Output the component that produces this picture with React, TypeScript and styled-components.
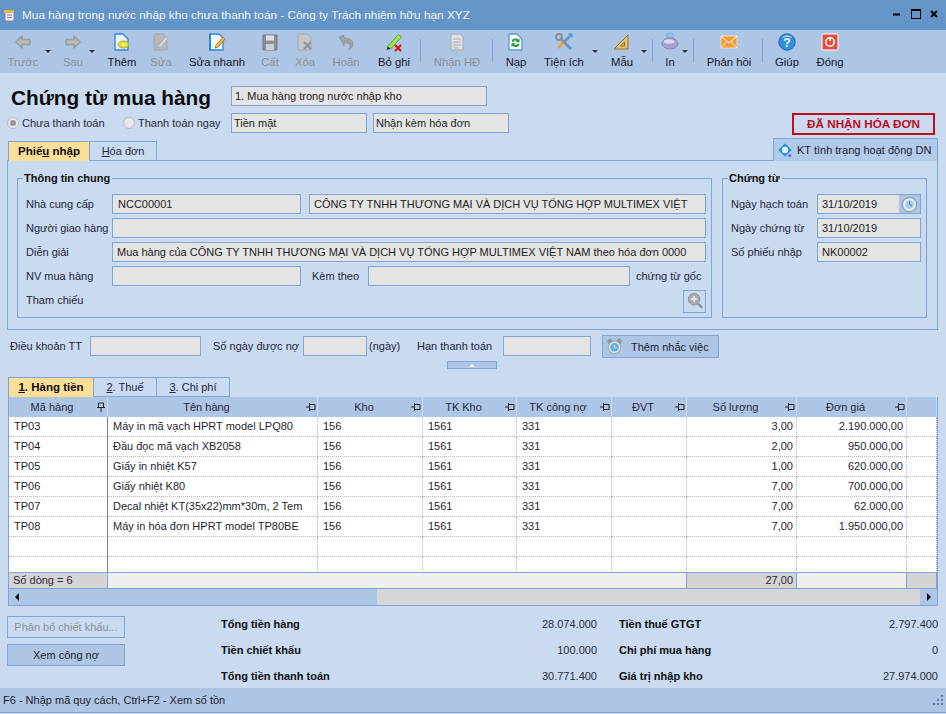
import React from "react";
import styled, { createGlobalStyle } from "styled-components";

const Global = createGlobalStyle`
  html, body { margin: 0; padding: 0; background: #c9daf1; }
  * { box-sizing: border-box; }
  body { font-family: "Liberation Sans", Arial, sans-serif; font-size: 11px; color: #1b1b2b; }
`;

const Page = styled.div`
  width: 946px; height: 714px; display: flex; flex-direction: column; overflow: hidden; background: #c9daf1;
`;
const TitleBar = styled.header`
  height: 30px; flex: none; background: #6495c8; display: flex; align-items: center; padding: 0 5px 0 3px; color: #f2f6fb; font-size: 11.8px;
`;
const TitleText = styled.span` margin-left: 6px; flex: 1; `;
const WinButtons = styled.div` display: flex; align-items: center; gap: 7px; margin-top: -2px; `;

const Toolbar = styled.nav` height: 43px; flex: none; background: #aec6e6; display: flex; align-items: flex-start; padding-left: 4px; `;
const ToolItem = styled.div<{ $w: number; $ml: number; $off?: boolean }>`
  position: relative; flex: none; width: ${p => p.$w}px; margin-left: ${p => p.$ml}px; height: 43px;
  display: flex; flex-direction: column; align-items: center; white-space: nowrap; padding-top: 2px;
  color: ${p => (p.$off ? "#8b9096" : "#15152a")}; font-size: 11.3px;
  span { margin-top: 3px; line-height: 14px; }
`;
const ToolCaret = styled.i<{ $x: number }>`
  position: absolute; top: 20px; left: ${p => p.$x}px; width: 0; height: 0;
  border-left: 3px solid transparent; border-right: 3px solid transparent; border-top: 3px solid #333;
`;
const ToolSep = styled.div<{ $ml: number }>` flex: none; width: 1px; height: 23px; margin: 9px 0 0 ${p => p.$ml}px; background: #7fa5d7; `;

const Body = styled.main` flex: 1; min-height: 0; padding: 0 8px 0 7px; display: flex; flex-direction: column; > * { flex: none; } `;
const HeadGrid = styled.section`
  margin-top: 13px; display: grid; grid-template-columns: 224px 1fr; grid-template-rows: 20px 20px; row-gap: 7px;
`;
const DocTitle = styled.h1` margin: 0 0 0 4px; font-size: 20.8px; line-height: 24px; font-weight: 700; color: #0c0c0c; white-space: nowrap; `;
const Field = styled.div<{ $w?: number; $pad?: number }>`
  height: 20px; line-height: 18px; padding: 0 ${p => p.$pad ?? 4}px; background: #e4e4e4; border: 1px solid #7fa5d7; color: #222; white-space: nowrap; overflow: hidden;
  flex: none; ${p => (p.$w ? `width: ${p.$w}px;` : "")}
`;
const RadioRow = styled.div` display: flex; align-items: center; color: #2a2a3a; `;
const Radio = styled.i<{ $on?: boolean }>`
  width: 12px; height: 12px; border-radius: 50%; margin-right: 3px; background: #e8e8e8; border: 1px solid #b5bcc6; flex: none;
  display: flex; align-items: center; justify-content: center;
  ${p => (p.$on ? `&::after { content: ""; width: 6px; height: 6px; border-radius: 50%; background: #9a9a9a; }` : "")}
`;
const RadioLabel = styled.label<{ $w: number }>` display: flex; align-items: center; width: ${p => p.$w}px; flex: none; white-space: nowrap; `;
const HeadFields = styled.div` display: flex; gap: 6px; align-items: flex-start; `;
const RedBox = styled.div`
  margin-left: auto; margin-right: 3px; width: 143px; height: 22px; border: 2px solid #c00d1e; color: #c00d1e; font-weight: 700; text-align: center; line-height: 18px; font-size: 11.7px;
`;

const TabRow = styled.div` margin-top: 5px; height: 23px; display: flex; align-items: flex-end; padding-left: 1px; position: relative; z-index: 1; `;
const Tab = styled.div<{ $w: number; $on?: boolean }>`
  width: ${p => p.$w}px; height: 20px; flex: none; text-align: center; line-height: 18px; border: 1px solid #7fa5d7; border-left-width: 0;
  border-bottom: ${p => (p.$on ? "0" : "1px solid #7fa5d7")};
  background: ${p => (p.$on ? "#fbdf99" : "#c9daf1")}; font-weight: ${p => (p.$on ? 700 : 400)}; color: ${p => (p.$on ? "#0c0c0c" : "#26263a")};
  font-size: ${p => (p.$on ? "11.5px" : "11px")};
  &:first-child { border-left: 1px solid #7fa5d7; }
  u { text-underline-offset: 1px; }
`;
const KtButton = styled.div`
  margin-left: auto; width: 165px; height: 23px; display: flex; align-items: center; gap: 4px; padding-left: 3px; background: #b3cbea; border: 1px solid #7fa5d7; border-bottom: 0; color: #1b1b2b; white-space: nowrap;
`;
const TabPanel = styled.section`
  height: 170px; margin-top: -1px; border: 1px solid #7fa5d7; padding: 10px 10px 10px 9px; display: grid; grid-template-columns: 695px 205px; column-gap: 10px;
`;
const Group = styled.fieldset`
  margin: 0; min-width: 0; border: 1px solid #7fa5d7; padding: 9px 5px 0 8px; height: 147px;
`;
const Legend = styled.legend` font-weight: 700; color: #0e0e0e; padding: 0 2px 0 1px; margin-left: -3px; line-height: 14px; `;
const FormRow = styled.div` display: flex; align-items: center; height: 20px; margin-bottom: 4px; white-space: nowrap; `;
const FormLabel = styled.label<{ $w: number }>` flex: none; width: ${p => p.$w}px; color: #26263a; `;
const Spacer = styled.div<{ $w: number }>` flex: none; width: ${p => p.$w}px; `;
const LookupButton = styled.div`
  margin-left: auto; width: 23px; height: 23px; margin-top: 2px; border: 1px solid #7fa5d7; display: flex; align-items: center; justify-content: center;
`;
const DateField = styled(Field)` padding-right: 0; display: flex; justify-content: space-between; `;
const DateButton = styled.div` width: 21px; height: 18px; background: #aec6e6; display: flex; align-items: center; justify-content: center; `;

const TermsRow = styled.section` margin-top: 6px; height: 23px; display: flex; align-items: flex-start; white-space: nowrap; color: #26263a; `;
const TermLabel = styled.label<{ $w: number; $ml?: number }>` flex: none; width: ${p => p.$w}px; margin-left: ${p => p.$ml ?? 0}px; line-height: 20px; `;
const RemindButton = styled.div`
  flex: none; margin: -1px 0 0 11px; width: 117px; height: 23px; background: #aec6e6; border: 1px solid #7fa5d7; display: flex; align-items: center; gap: 8px; padding-left: 3px; color: #1b1b2b;
`;
const CollapseBar = styled.div`
  margin: 2px 0 0 440px; width: 50px; height: 8px; background: #aec6e6; border: 1px solid #7fa5d7; display: flex; justify-content: center; align-items: center;
  &::after { content: ""; border-left: 3px solid transparent; border-right: 3px solid transparent; border-bottom: 3px solid #fff; }
`;
const GridTabs = styled.div` margin-top: 8px; height: 20px; display: flex; padding-left: 1px; `;

const GridBox = styled.section` margin-left: 1px; width: 930px; border: 1px solid #7fa5d7; border-top: 0; background: #fff; `;
const COLS = "99px 210px 105px 94px 95px 75px 110px 110px 30px";
const HeadRow = styled.div` display: grid; grid-template-columns: ${COLS}; height: 20px; background: #aec6e6; `;
const HeadCell = styled.div`
  position: relative; text-align: center; line-height: 20px; padding-right: 12px; color: #26263a; border-right: 1px solid #c9daf1; white-space: nowrap; overflow: hidden;
  svg { position: absolute; right: 1px; top: 5px; }
`;
const RowsArea = styled.div` height: 155px; overflow: hidden; `;
const DataRow = styled.div` display: grid; grid-template-columns: ${COLS}; height: 20px; `;
const Cell = styled.div<{ $right?: boolean; $first?: boolean }>`
  padding: 0 3px 0 5px; line-height: 19px; text-align: ${p => (p.$right ? "right" : "left")}; color: #1e1e2e; white-space: nowrap; overflow: hidden;
  border-bottom: 1px dotted #b8b8b8; border-right: ${p => (p.$first ? "1px solid #808080" : "1px dotted #b8b8b8")};
`;
const FootRow = styled.div` display: grid; grid-template-columns: 99px 579px 110px 110px 30px; height: 16px; border-top: 1px solid #7fa5d7; `;
const FootCell = styled.div<{ $dark?: boolean; $right?: boolean }>`
  background: ${p => (p.$dark ? "#d4d4d4" : "#efefef")}; border-right: 1px solid #7fa5d7; padding: 0 3px 0 4px; line-height: 15px; text-align: ${p => (p.$right ? "right" : "left")}; color: #2a2a3a;
`;
const ScrollBar = styled.div` height: 17px; border-top: 1px solid #7fa5d7; display: flex; background: #d6d6d6; `;
const ScrollThumb = styled.div` width: 368px; background: #aec6e6; display: flex; align-items: center; padding-left: 6px; `;
const ScrollEnd = styled.div` margin-left: auto; width: 17px; background: #aec6e6; display: flex; align-items: center; justify-content: center; `;
const Arrow = styled.i<{ $dir: "l" | "r" }>`
  width: 0; height: 0; border-top: 4px solid transparent; border-bottom: 4px solid transparent;
  ${p => (p.$dir === "l" ? "border-right: 4px solid #111;" : "border-left: 4px solid #111;")}
`;

const Bottom = styled.section` margin-top: 5px; height: 77px; display: flex; `;
const BottomButtons = styled.div` flex: none; width: 118px; margin-right: 96px; padding-top: 5px; display: flex; flex-direction: column; gap: 6px; `;
const PlainButton = styled.div<{ $off?: boolean }>`
  height: 22px; line-height: 20px; text-align: center; border: 1px solid #7fa5d7; background: ${p => (p.$off ? "#c9daf1" : "#aec6e6")}; color: ${p => (p.$off ? "#8b9096" : "#1b1b2b")};
`;
const Summary = styled.div` display: grid; grid-template-columns: 376px 319px; column-gap: 22px; grid-auto-rows: 26px; `;
const SumCell = styled.div` display: flex; justify-content: space-between; align-items: center; strong { color: #0e0e0e; } span { color: #2a2a3a; } `;

const StatusBar = styled.footer`
  height: 25px; flex: none; margin-bottom: 1px; background: #aec6e6; border-bottom: 1px solid #7fa5d7; display: flex; align-items: center; justify-content: space-between; padding: 0 2px 0 3px; color: #1b1b2b;
`;

const Svg: React.FC<{ s?: number; children: React.ReactNode }> = ({ s = 20, children }) => (
  <svg width={s} height={s} viewBox="0 0 20 20" fill="none">{children}</svg>
);

const Doc = ({ c, f }: { c: string; f: string }) => (
  <path d="M3 2h8l5 5v11H3z" fill={f} stroke={c} strokeWidth="1.3" strokeLinejoin="round" />
);

const icons: Record<string, React.ReactNode> = {
  back: <Svg><path d="M9 4L3 10l6 6v-3.5h8v-5H9z" fill="#b9babb" stroke="#9a9c9e" strokeWidth="1.6" strokeLinejoin="round" /></Svg>,
  next: <Svg><path d="M11 4l6 6-6 6v-3.5H3v-5h8z" fill="#b9babb" stroke="#9a9c9e" strokeWidth="1.6" strokeLinejoin="round" /></Svg>,
  add: <Svg><Doc c="#2a86d8" f="#eef6fd" /><ellipse cx="11.5" cy="12.5" rx="5.5" ry="3.6" fill="#e9d63a" stroke="#a5981c" strokeWidth=".8" /><ellipse cx="11.5" cy="12.5" rx="2" ry="1.2" fill="#fff8b8" /></Svg>,
  edit: <Svg><path d="M3 2h9l4 4v12H3z" fill="#b6b8ba" stroke="#a0a2a4" /><path d="M8 13l7-8 2 1.5-7 8-3 1z" fill="#d9dbdc" stroke="#a0a2a4" strokeWidth=".6" /></Svg>,
  quick: <Svg><path d="M3 2h9l4 4v12H3z" fill="#eef6fd" stroke="#2a86d8" strokeWidth="1.3" /><path d="M3 2v16" stroke="#2a86d8" strokeWidth="2" /><path d="M9 13l7-8 2.2 2-7 8-3.2 1z" fill="#f0b93c" stroke="#8a6a20" strokeWidth=".7" /></Svg>,
  save: <Svg><path d="M3 3h14v15H3z" fill="#8c9094" stroke="#75797d" /><path d="M6 3.5h8v5H6z" fill="#e2e3e4" /><path d="M6 12h8v6H6z" fill="#cfd1d3" /></Svg>,
  del: <Svg><path d="M3 2h9l4 4v12H3z" fill="#c6c8ca" stroke="#a4a8ac" /><path d="M9 10l7 7m0-7l-7 7" stroke="#8f9397" strokeWidth="2.2" /></Svg>,
  undo: <Svg><path d="M3 5l5-2v3c5 0 9 2 9 6 0 3-2 5-5 6 2-2 3-4 1-6-1-1-3-1-5-1v3z" fill="#9ea2a7" stroke="#888c91" strokeWidth=".6" /></Svg>,
  skip: <Svg><path d="M3.5 14.5L14.5 2.5l3 2.5-11 12z" fill="#a9e05a" stroke="#5a9a2a" strokeWidth=".9" /><path d="M3.5 14.5l-1 3.5 4-1z" fill="#333" /><path d="M11 13l6 6m0-6l-6 6" stroke="#e01010" strokeWidth="2" /></Svg>,
  recv: <Svg><path d="M4 2h9l3 3v13H4z" fill="#dfe0e1" stroke="#a4a8ac" /><path d="M6.5 7h7M6.5 10h7M6.5 13h7M6.5 16h5" stroke="#a4a8ac" /></Svg>,
  load: <Svg><Doc c="#5f9ad2" f="#f2f7fc" /><path d="M5.5 9.5a4 4 0 016.8-1.8l1.2-1.2v3.8H9.7l1.2-1.2a2.2 2.2 0 00-3.6.9zM13.5 12a4 4 0 01-6.8 1.8l-1.2 1.2v-3.8h3.8l-1.2 1.2a2.2 2.2 0 003.6-.9z" fill="#1f9a35" /></Svg>,
  tools: <Svg><path d="M4 16L15 5" stroke="#e8a33c" strokeWidth="2.5" /><path d="M10 10l6-6" stroke="#4f9cd8" strokeWidth="2.5" /><path d="M14 2l4 4 1-3-2-2z" fill="#4f9cd8" /><path d="M14 14L6 6" stroke="#8a8f96" strokeWidth="2.5" /><circle cx="5" cy="5" r="3" fill="none" stroke="#8a8f96" strokeWidth="2" /><path d="M13 13l4 4" stroke="#4f9cd8" strokeWidth="3" /></Svg>,
  form: <Svg><path d="M16 3v14H2z" fill="#e6c46c" stroke="#94702a" /><path d="M12.5 10v4H8.5z" fill="#aec6e6" stroke="#94702a" /></Svg>,
  print: <Svg><path d="M6 2l6-1 2 4-6 1z" fill="#8ecbf2" stroke="#5f9ed0" strokeWidth=".6" /><ellipse cx="10" cy="11.5" rx="8" ry="5.5" fill="#a9a2d0" stroke="#7a74a8" strokeWidth=".7" /><ellipse cx="9" cy="9.5" rx="5.5" ry="2.2" fill="#dcd8ee" /></Svg>,
  mail: <Svg><path d="M2 4h16v12H2z" fill="#f39a3a" stroke="#fbe3c8" strokeWidth=".8" /><path d="M2 4l8 7 8-7M2 16l6-6.5M18 16l-6-6.5" stroke="#fff" strokeWidth="1" /></Svg>,
  help: <Svg><circle cx="10" cy="10" r="8.2" fill="#2f8fe0" stroke="#1c64a8" /><path d="M5 6a6 6 0 0110 0c-3-1.5-7-1.5-10 0z" fill="#a8d6f8" /><text x="10" y="14.5" fontSize="12" fontWeight="700" textAnchor="middle" fill="#fff" fontFamily="Liberation Sans">?</text></Svg>,
  close: <Svg><rect x="2" y="2" width="16" height="16" rx="1" fill="#e2503a" stroke="#fff" /><circle cx="10" cy="10" r="4.2" stroke="#fff" strokeWidth="1.6" /><path d="M10 5v4" stroke="#fff" strokeWidth="1.6" /></Svg>,
};

type Tool = { t: string; i: string; w: number; ml: number; off?: boolean; caret?: number } | { sep: number };
const tools: Tool[] = [
  { t: "Trước", i: "back", w: 38, ml: 0, off: true, caret: 41 },
  { t: "Sau", i: "next", w: 38, ml: 12, off: true, caret: 35 },
  { t: "Thêm", i: "add", w: 36, ml: 12 },
  { t: "Sửa", i: "edit", w: 30, ml: 6, off: true },
  { t: "Sửa nhanh", i: "quick", w: 62, ml: 10 },
  { t: "Cất", i: "save", w: 28, ml: 8, off: true },
  { t: "Xóa", i: "del", w: 28, ml: 7, off: true },
  { t: "Hoãn", i: "undo", w: 36, ml: 9, off: true },
  { t: "Bỏ ghi", i: "skip", w: 40, ml: 10 },
  { sep: 6 },
  { t: "Nhận HĐ", i: "recv", w: 54, ml: 9, off: true },
  { sep: 8 },
  { t: "Nạp", i: "load", w: 28, ml: 9 },
  { t: "Tiện ích", i: "tools", w: 46, ml: 11, caret: 51 },
  { t: "Mẫu", i: "form", w: 30, ml: 20, caret: 34 },
  { sep: 15 },
  { t: "In", i: "print", w: 16, ml: 9, caret: 20 },
  { sep: 15 },
  { t: "Phản hồi", i: "mail", w: 50, ml: 10 },
  { sep: 8 },
  { t: "Giúp", i: "help", w: 30, ml: 9 },
  { t: "Đóng", i: "close", w: 32, ml: 12 },
];

const columns = ["Mã hàng", "Tên hàng", "Kho", "TK Kho", "TK công nợ", "ĐVT", "Số lượng", "Đơn giá", ""];
const rows = [
  ["TP03", "Máy in mã vạch HPRT model LPQ80", "156", "1561", "331", "", "3,00", "2.190.000,00", ""],
  ["TP04", "Đầu đọc mã vạch XB2058", "156", "1561", "331", "", "2,00", "950.000,00", ""],
  ["TP05", "Giấy in nhiệt K57", "156", "1561", "331", "", "1,00", "620.000,00", ""],
  ["TP06", "Giấy nhiệt K80", "156", "1561", "331", "", "7,00", "700.000,00", ""],
  ["TP07", "Decal nhiệt KT(35x22)mm*30m, 2 Tem", "156", "1561", "331", "", "7,00", "62.000,00", ""],
  ["TP08", "Máy in hóa đơn HPRT model TP80BE", "156", "1561", "331", "", "7,00", "1.950.000,00", ""],
  ["", "", "", "", "", "", "", "", ""],
  ["", "", "", "", "", "", "", "", ""],
];

const PinV = () => (
  <svg width="10" height="10" viewBox="0 0 10 10"><path d="M2.5 1h5v4.5h-5zM1 5.5h8M5 5.5V10" stroke="#222" fill="none" /></svg>
);
const PinH = () => (
  <svg width="10" height="10" viewBox="0 0 10 10"><path d="M3.5 2.5h5.5v5H3.5zM3.5 1v8M0 5h3.5" stroke="#222" fill="none" /></svg>
);
const Clock = ({ s = 17 }: { s?: number }) => (
  <svg width={s} height={s} viewBox="0 0 20 20"><circle cx="10" cy="10" r="8.5" fill="#d8e6ee" stroke="#8fa0ac" strokeWidth="1.5" /><circle cx="10" cy="10" r="5.8" fill="#9fd0ea" stroke="#fff" /><path d="M10 6v4l3 1" stroke="#4a6a80" fill="none" /></svg>
);
const Alarm = () => (
  <svg width="17" height="17" viewBox="0 0 20 20"><circle cx="4.5" cy="4" r="3" fill="#8f9aa4" /><circle cx="15.5" cy="4" r="3" fill="#8f9aa4" /><circle cx="10" cy="11" r="7.5" fill="#d9dfe3" stroke="#8f9aa4" /><circle cx="10" cy="11" r="5" fill="#5fb0e4" /><path d="M10 8v3l2 1" stroke="#fff" fill="none" /></svg>
);
const AppIcon = () => (
  <svg width="13" height="14" viewBox="0 0 13 14"><path d="M2 3h9v10H2z" fill="#f4f4ff" stroke="#7a78c8" /><path d="M1 2h10v3H1z" fill="#e8b93c" /><path d="M4 7h5M4 9.5h5" stroke="#7a78c8" /></svg>
);
const Globe = () => (
  <svg width="16" height="16" viewBox="0 0 20 20"><path d="M10 1l9 9-9 9-9-9z" fill="#2f8fd8" stroke="#a8d6f8" /><circle cx="10" cy="10" r="4" fill="#dff0fc" /><circle cx="16" cy="17" r="2" fill="#8a60c0" /></svg>
);
const Zoomer = () => (
  <svg width="18" height="18" viewBox="0 0 20 20"><circle cx="9" cy="8" r="6.5" fill="#a6aaae" stroke="#8a8f96" /><path d="M9 4.5v7M5.5 8h7" stroke="#e4e6e8" strokeWidth="2" /><path d="M13.5 13l4.5 4.5" stroke="#8a8f96" strokeWidth="2.4" /></svg>
);
const Grip = () => (
  <svg width="11" height="11" viewBox="0 0 11 11" fill="#5f7fa8"><rect x="8" y="0" width="2" height="2" /><rect x="4" y="4" width="2" height="2" /><rect x="8" y="4" width="2" height="2" /><rect x="0" y="8" width="2" height="2" /><rect x="4" y="8" width="2" height="2" /><rect x="8" y="8" width="2" height="2" /></svg>
);

const sum = [
  ["Tổng tiền hàng", "28.074.000"],
  ["Tiền thuế GTGT", "2.797.400"],
  ["Tiền chiết khấu", "100.000"],
  ["Chi phí mua hàng", "0"],
  ["Tổng tiền thanh toán", "30.771.400"],
  ["Giá trị nhập kho", "27.974.000"],
];

export default function App() {
  return (
    <Page>
      <Global />
      <TitleBar>
        <AppIcon />
        <TitleText>Mua hàng trong nước nhập kho chưa thanh toán - Công ty Trách nhiệm hữu hạn XYZ</TitleText>
        <WinButtons>
          <svg width="12" height="12" viewBox="0 0 12 12"><path d="M2 6.5h7" stroke="#000" strokeWidth="2" /></svg>
          <svg width="12" height="12" viewBox="0 0 12 12"><path d="M1 1.5h10M1 10.5h10M1.5 1v10M10.5 1v10" stroke="#000" /><path d="M1 2.5h10" stroke="#000" /></svg>
          <svg width="12" height="12" viewBox="0 0 12 12"><path d="M2 3l6 6M8 3l-6 6" stroke="#000" strokeWidth="2" /></svg>
        </WinButtons>
      </TitleBar>
      <Toolbar>
        {tools.map((x, i) =>
          "sep" in x ? (
            <ToolSep key={i} $ml={x.sep} />
          ) : (
            <ToolItem key={i} $w={x.w} $ml={x.ml} $off={x.off}>
              {icons[x.i]}
              <span>{x.t}</span>
              {x.caret !== undefined && <ToolCaret $x={x.caret} />}
            </ToolItem>
          )
        )}
      </Toolbar>
      <Body>
        <HeadGrid>
          <DocTitle>Chứng từ mua hàng</DocTitle>
          <HeadFields><Field $w={256} $pad={3}>1. Mua hàng trong nước nhập kho</Field></HeadFields>
          <RadioRow>
            <RadioLabel $w={116}><Radio $on />Chưa thanh toán</RadioLabel>
            <RadioLabel $w={108}><Radio />Thanh toán ngay</RadioLabel>
          </RadioRow>
          <HeadFields>
            <Field $w={136} $pad={2}>Tiền mặt</Field>
            <Field $w={136} $pad={2}>Nhận kèm hóa đơn</Field>
            <RedBox>ĐÃ NHẬN HÓA ĐƠN</RedBox>
          </HeadFields>
        </HeadGrid>
        <TabRow>
          <Tab $w={82} $on>Phiế<u>u</u> nhập</Tab>
          <Tab $w={67}><u>H</u>óa đơn</Tab>
          <KtButton><Globe />KT tình trạng hoạt động DN</KtButton>
        </TabRow>
        <TabPanel>
          <Group>
            <Legend>Thông tin chung</Legend>
            <FormRow>
              <FormLabel $w={86}>Nhà cung cấp</FormLabel>
              <Field $w={189} $pad={5}>NCC00001</Field>
              <Spacer $w={8} />
              <Field $w={397}>CÔNG TY TNHH THƯƠNG MẠI VÀ DỊCH VỤ TỔNG HỢP MULTIMEX VIỆT</Field>
            </FormRow>
            <FormRow>
              <FormLabel $w={86}>Người giao hàng</FormLabel>
              <Field $w={594} />
            </FormRow>
            <FormRow>
              <FormLabel $w={86}>Diễn giải</FormLabel>
              <Field $w={594}>Mua hàng của CÔNG TY TNHH THƯƠNG MẠI VÀ DỊCH VỤ TỔNG HỢP MULTIMEX VIỆT NAM theo hóa đơn 0000</Field>
            </FormRow>
            <FormRow>
              <FormLabel $w={86}>NV mua hàng</FormLabel>
              <Field $w={189} />
              <Spacer $w={11} />
              <FormLabel $w={56}>Kèm theo</FormLabel>
              <Field $w={262} />
              <Spacer $w={6} />
              <FormLabel $w={64}>chứng từ gốc</FormLabel>
            </FormRow>
            <FormRow>
              <FormLabel $w={86}>Tham chiếu</FormLabel>
              <LookupButton><Zoomer /></LookupButton>
            </FormRow>
          </Group>
          <Group>
            <Legend>Chứng từ</Legend>
            <FormRow>
              <FormLabel $w={86}>Ngày hạch toán</FormLabel>
              <DateField $w={104}>31/10/2019<DateButton><Clock /></DateButton></DateField>
            </FormRow>
            <FormRow>
              <FormLabel $w={86}>Ngày chứng từ</FormLabel>
              <Field $w={104}>31/10/2019</Field>
            </FormRow>
            <FormRow>
              <FormLabel $w={86}>Số phiếu nhập</FormLabel>
              <Field $w={104}>NK00002</Field>
            </FormRow>
          </Group>
        </TabPanel>
        <TermsRow>
          <TermLabel $w={80} $ml={3}>Điều khoản TT</TermLabel>
          <Field $w={111} />
          <TermLabel $w={90} $ml={12}>Số ngày được nợ</TermLabel>
          <Field $w={64} />
          <TermLabel $w={48} $ml={2}>(ngày)</TermLabel>
          <TermLabel $w={86}>Hạn thanh toán</TermLabel>
          <Field $w={88} />
          <RemindButton><Alarm />Thêm nhắc việc</RemindButton>
        </TermsRow>
        <CollapseBar />
        <GridTabs>
          <Tab $w={86} $on><u>1</u>. Hàng tiền</Tab>
          <Tab $w={63}><u>2</u>. Thuế</Tab>
          <Tab $w={73}><u>3</u>. Chi phí</Tab>
        </GridTabs>
        <GridBox>
          <HeadRow>
            {columns.map((c, i) => (
              <HeadCell key={i}>{c}{i === 0 ? <PinV /> : i < 8 ? <PinH /> : null}</HeadCell>
            ))}
          </HeadRow>
          <RowsArea>
            {rows.map((r, i) => (
              <DataRow key={i}>
                {r.map((v, j) => (
                  <Cell key={j} $first={j === 0} $right={j === 6 || j === 7}>{v}</Cell>
                ))}
              </DataRow>
            ))}
          </RowsArea>
          <FootRow>
            <FootCell $dark>Số dòng = 6</FootCell>
            <FootCell />
            <FootCell $dark $right>27,00</FootCell>
            <FootCell />
            <FootCell $dark />
          </FootRow>
          <ScrollBar>
            <ScrollThumb><Arrow $dir="l" /></ScrollThumb>
            <ScrollEnd><Arrow $dir="r" /></ScrollEnd>
          </ScrollBar>
        </GridBox>
        <Bottom>
          <BottomButtons>
            <PlainButton $off>Phân bổ chiết khấu...</PlainButton>
            <PlainButton>Xem công nợ</PlainButton>
          </BottomButtons>
          <Summary>
            {sum.map(([l, v]) => (
              <SumCell key={l}><strong>{l}</strong><span>{v}</span></SumCell>
            ))}
          </Summary>
        </Bottom>
      </Body>
      <StatusBar>
        <span>F6 - Nhập mã quy cách, Ctrl+F2 - Xem số tồn</span>
        <Grip />
      </StatusBar>
    </Page>
  );
}
